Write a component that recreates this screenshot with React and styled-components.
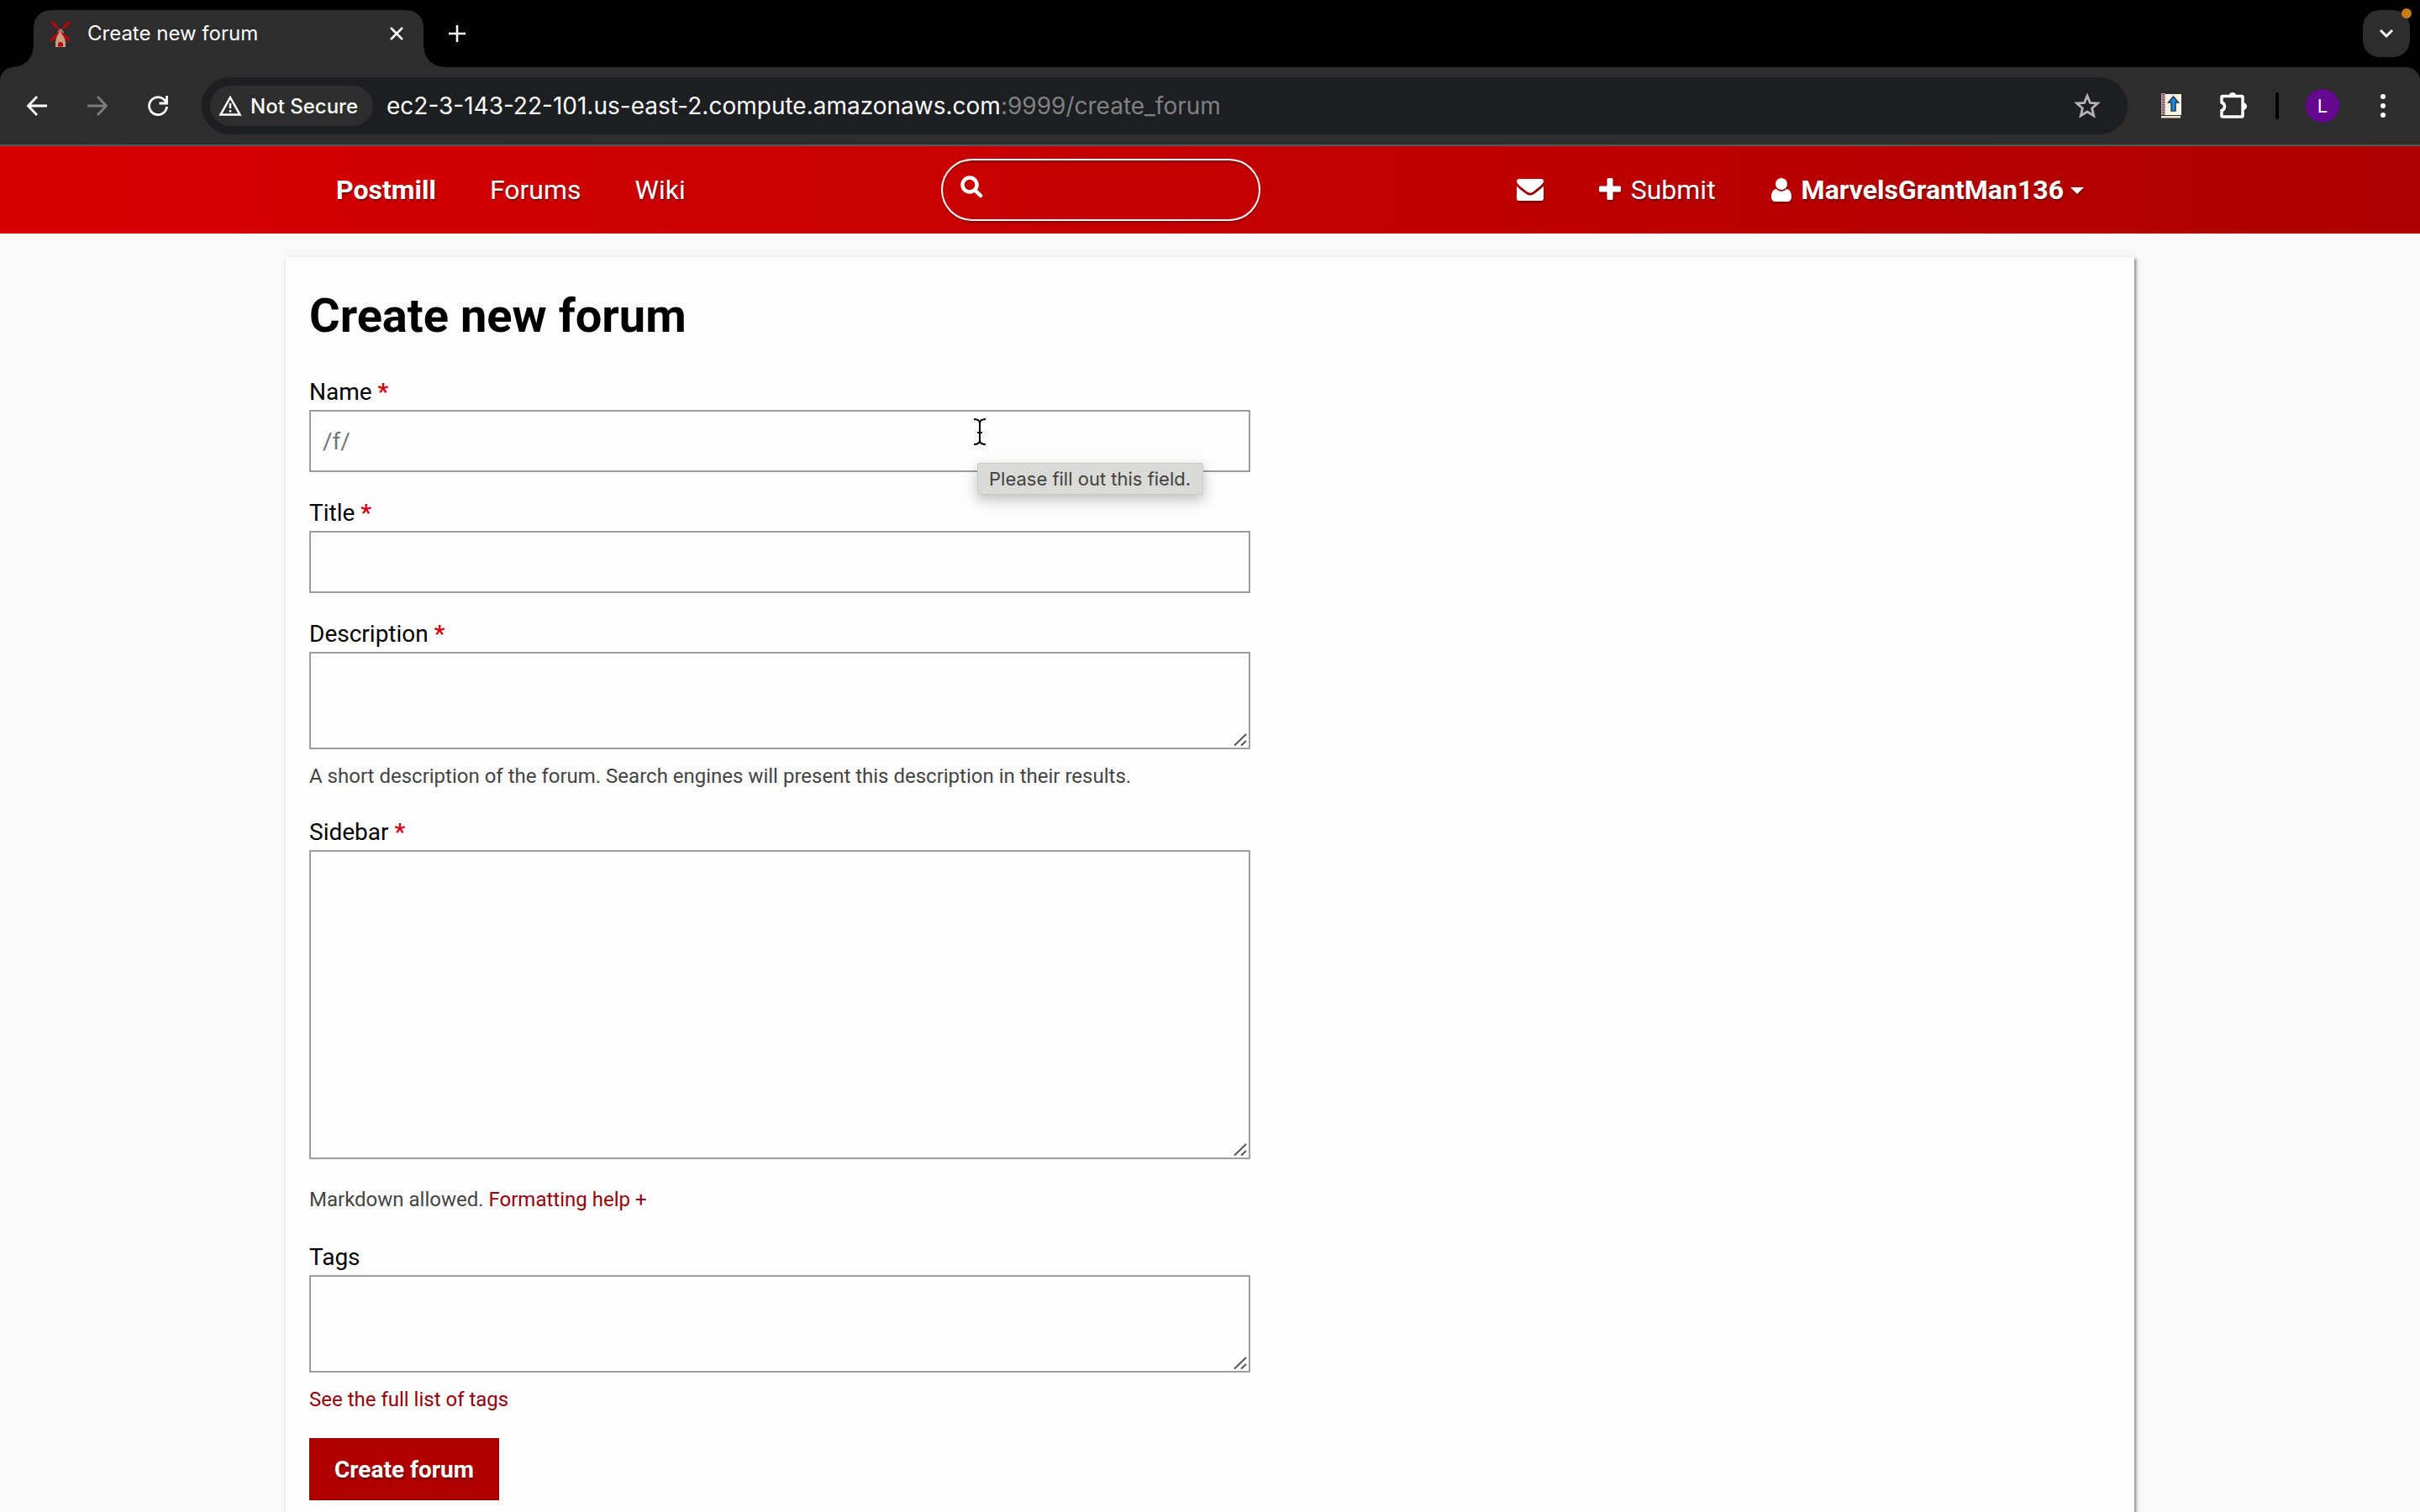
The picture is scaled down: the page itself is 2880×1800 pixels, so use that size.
import React from "react";
import styled, { createGlobalStyle, css } from "styled-components";

const GlobalStyle = createGlobalStyle`
  * { box-sizing: border-box; }
  body { margin: 0; background: #f9f9f9; }
  button, input, textarea { font: inherit; color: inherit; }
`;

const Window = styled.div`
  display: flex;
  flex-direction: column;
  height: 100vh;
  overflow: hidden;
  background: #000;
  font-family: Roboto, "Liberation Sans", sans-serif;
`;

/* Browser chrome */

const TabStrip = styled.div`
  flex: none;
  display: flex;
  align-items: center;
  height: 80px;
  padding: 12px 12px 0 40px;
  font-family: Inter, "Liberation Sans", sans-serif;
`;

const Tab = styled.div`
  position: relative;
  display: flex;
  align-items: center;
  align-self: stretch;
  gap: 18px;
  width: 464px;
  padding: 0 17px 12px 18px;
  border-radius: 20px 20px 0 0;
  background: #2d2d2d;
  color: #fff;
  font-size: 24px;
  line-height: 30px;

  &::before, &::after {
    content: "";
    position: absolute;
    bottom: 0;
    width: 24px;
    height: 24px;
  }
  &::before {
    right: 100%;
    background: radial-gradient(circle at 0 0, transparent 23px, #2d2d2d 24px);
  }
  &::after {
    left: 100%;
    background: radial-gradient(circle at 100% 0, transparent 23px, #2d2d2d 24px);
  }
`;

const TabTitle = styled.span`
  flex: 1;
  white-space: nowrap;
`;

const IconButton = styled.button`
  display: flex;
  align-items: center;
  justify-content: center;
  flex: none;
  width: ${(p) => p.$size || 48}px;
  height: ${(p) => p.$size || 48}px;
  padding: 0;
  border: 0;
  border-radius: 50%;
  background: none;
  color: ${(p) => p.$color || "#fff"};
`;

const NewTabButton = styled(IconButton)`
  margin: 0 auto 12px 16px;
`;

const TabSearch = styled(IconButton)`
  position: relative;
  margin-bottom: 12px;
  border-radius: 20px;
  background: #2d2d2d;

  &::after {
    content: "";
    position: absolute;
    top: -2px;
    right: -2px;
    width: 12px;
    height: 12px;
    border-radius: 50%;
    background: #c97a1c;
  }
`;

const Toolbar = styled.div`
  flex: none;
  display: flex;
  align-items: center;
  height: 94px;
  padding: 0 20px;
  border-bottom: 2px solid #565656;
  border-radius: 16px 16px 0 0;
  background: #2d2d2d;
  font-family: Inter, "Liberation Sans", sans-serif;
`;

const HistoryButtons = styled.div`
  display: flex;
  gap: 24px;
  margin-right: 28px;
`;

const AddressBar = styled.div`
  flex: 1;
  display: flex;
  align-items: center;
  height: 68px;
  padding: 0 24px 0 10px;
  border-radius: 34px;
  background: #1d1e21;
`;

const SecurityChip = styled.button`
  display: flex;
  align-items: center;
  gap: 10px;
  height: 48px;
  padding: 0 18px 0 10px;
  border: 0;
  border-radius: 24px;
  background: #2d2d2d;
  color: #fff;
  font-size: 24px;
  font-weight: 500;
  white-space: nowrap;
`;

const Address = styled.span`
  flex: 1;
  margin-left: 16px;
  color: #fff;
  font-size: 28px;
  line-height: 36px;
  white-space: nowrap;
`;

const AddressPath = styled.span`
  color: #808184;
`;

const ToolbarActions = styled.div`
  display: flex;
  align-items: center;
  gap: 26px;
  margin-left: 28px;
`;

const ToolbarDivider = styled.span`
  width: 4px;
  height: 32px;
  border-radius: 2px;
  background: #000;
`;

const Avatar = styled(IconButton)`
  margin: 0 2px 0 6px;
  background: #66078f;
  font-size: 22px;
`;

/* Site */

const Viewport = styled.div`
  flex: 1;
  min-height: 0;
  overflow: auto;
  scrollbar-width: none;
  background: #f9f9f9;
  color: #000;
`;

const SiteHeader = styled.header`
  background: linear-gradient(90deg, #d80003, #ae0000);
  color: #fff;
`;

const HeaderInner = styled.div`
  display: flex;
  align-items: center;
  justify-content: space-between;
  max-width: 2200px;
  height: 104px;
  margin: 0 auto;
  padding: 0 28px;
`;

const Nav = styled.nav`
  display: flex;
  align-items: center;
  gap: ${(p) => p.$gap || 0}px;
`;

const NavLink = styled.a`
  display: flex;
  align-items: center;
  gap: 12px;
  padding: 0 32px;
  color: #fff;
  font-size: 32px;
  line-height: 48px;
  font-weight: ${(p) => (p.$strong ? 700 : 400)};
  text-decoration: none;
  text-shadow: 1px 2px 2px rgba(0, 0, 0, 0.45);
  white-space: nowrap;

  svg { filter: drop-shadow(1px 2px 1px rgba(0, 0, 0, 0.35)); }
`;

const UserName = styled.span`
  display: flex;
  align-items: center;
  gap: 8px;
`;

const SearchBox = styled.label`
  display: flex;
  align-items: center;
  gap: 12px;
  width: 380px;
  height: 74px;
  padding: 0 20px;
  border: 2px solid #fff;
  border-radius: 37px;
  box-shadow: 0 2px 2px rgba(0, 0, 0, 0.3), inset 0 2px 2px rgba(0, 0, 0, 0.3);

  svg { margin-bottom: 8px; }
`;

const SearchInput = styled.input`
  flex: 1;
  min-width: 0;
  padding: 0;
  border: 0;
  outline: 0;
  background: none;
  font-size: 28px;
`;

const Card = styled.main`
  max-width: 2200px;
  margin: 28px auto 0;
  padding: 42px 28px 28px;
  background: #fdfdfd;
  box-shadow: 2px 2px 4px rgba(0, 0, 0, 0.5);
`;

const Heading = styled.h1`
  margin: 0 0 42px;
  font-size: 56px;
  line-height: 56px;
  font-weight: 700;
`;

const Form = styled.form`
  display: flex;
  flex-direction: column;
  align-items: flex-start;
  gap: 28px;
`;

const Field = styled.div`
  width: 100%;
  max-width: 1120px;
`;

const Label = styled.label`
  display: block;
  font-size: 28px;
  line-height: 42px;
`;

const Required = styled.span`
  color: #d3000d;
  font-weight: 700;
`;

const ControlWrap = styled.div`
  position: relative;
  display: flex;
`;

const control = css`
  display: block;
  width: 100%;
  margin: 0;
  padding: 14px;
  border: 2px solid #9e9e9e;
  border-radius: 0;
  outline: 0;
  background: #fdfdfd;
  font-size: 28px;
  line-height: 42px;
`;

const TextInput = styled.input`
  ${control}
  height: 74px;
  &::placeholder { color: #757575; opacity: 1; }
`;

const TextArea = styled.textarea`
  ${control}
  height: ${(p) => p.$height}px;
  resize: none;
`;

const Grip = styled.svg`
  position: absolute;
  right: 3px;
  bottom: 3px;
`;

const Pointer = styled.svg`
  position: absolute;
  top: 9px;
  left: 790px;
`;

const Tooltip = styled.div`
  position: absolute;
  top: 63px;
  left: 795px;
  z-index: 1;
  padding: 0 14px 0 13px;
  border: 1px solid #c9c9c7;
  border-radius: 2px;
  background: #dadad7;
  box-shadow: 0 6px 16px rgba(0, 0, 0, 0.25);
  color: #424240;
  font-family: Inter, "Liberation Sans", sans-serif;
  font-size: 22px;
  line-height: 36px;
  white-space: nowrap;
`;

const Help = styled.p`
  margin: ${(p) => (p.$roomy ? 28 : 14)}px 0 0;
  color: #444;
  font-size: 24px;
  line-height: ${(p) => (p.$roomy ? 40 : 36)}px;
`;

const TextLink = styled.a`
  color: #96000b;
  text-decoration: none;
`;

const SubmitButton = styled.button`
  height: 74px;
  padding: 0 29px;
  border: 1px solid #8f0000;
  background: #b00000;
  color: #fff;
  font-size: 28px;
  font-weight: 700;
  text-shadow: 1px 2px 2px rgba(0, 0, 0, 0.45);
`;

const Stroke = ({ size, width = 3, box = 24, children }) => (
  <svg width={size} height={size} viewBox={`0 0 ${box} ${box}`} fill="none" stroke="currentColor" strokeWidth={width} aria-hidden="true">
    {children}
  </svg>
);

const Windmill = () => (
  <svg width="28" height="32" viewBox="0 0 28 32" aria-hidden="true">
    <path d="M11 13l3-2 3 2 3 13v6H8v-6z" fill="#c9a083" />
    <path d="M1 0l6 3 7.500 10L6 8zM27 1l-6 2-7.500 10L22 8zM1 27l2-6 11-9-6 10zM26 27l-2-6-11-9 6 10z" fill="#b8060e" />
    <circle cx="14" cy="12.500" r="2.200" fill="#a8716a" />
    <path d="M11 31.500V29a3 3 0 0 1 6 0v2.500z" fill="#b8060e" />
  </svg>
);

const Notebook = () => (
  <svg width="26" height="32" viewBox="0 0 26 32" aria-hidden="true">
    <path d="M1 1h24v27H1z" fill="#26313a" />
    <path d="M1 28h23v2.500H1z" fill="#efe6d2" />
    <path d="M6 2h19v25H6z" fill="#fbf3e2" />
    <path d="M1 1h5v26H1z" fill="#c79aa8" />
    <path d="M3.500 2v25" stroke="#3b3a48" strokeWidth="2" strokeDasharray="1.500 1.500" />
    <path d="M15.500 5l6 7h-3.500v10h-5V12H9.500z" fill="#1e86dc" stroke="#1d3a55" strokeWidth="1.500" />
  </svg>
);

const ResizeGrip = () => (
  <Grip width="18" height="18" viewBox="0 0 18 18" stroke="#555" strokeWidth="2" aria-hidden="true">
    <path d="M2 16.500L16 3M10 16.500L16 11" />
  </Grip>
);

export default function App() {
  return (
    <Window>
      <GlobalStyle />
      <TabStrip>
        <Tab>
          <Windmill />
          <TabTitle>Create new forum</TabTitle>
          <IconButton $size={30} aria-label="Close tab">
            <Stroke size={18} width={2.5} box={18}><path d="M2 2l14 14M16 2L2 16" /></Stroke>
          </IconButton>
        </Tab>
        <NewTabButton aria-label="New tab">
          <Stroke size={22} width={2.5} box={22}><path d="M11 1v20M1 11h20" /></Stroke>
        </NewTabButton>
        <TabSearch $size={56} aria-label="Search tabs">
          <Stroke size={18} box={18}><path d="M2 5l7 7 7-7" /></Stroke>
        </TabSearch>
      </TabStrip>

      <Toolbar>
        <HistoryButtons>
          <IconButton aria-label="Back">
            <Stroke size={26} width={2.8} box={26}><path d="M25 13H3M13 2L2.500 13 13 24" /></Stroke>
          </IconButton>
          <IconButton aria-label="Forward" $color="#7c7c7c">
            <Stroke size={26} width={2.8} box={26}><path d="M1 13h22M13 2l10.500 11L13 24" /></Stroke>
          </IconButton>
          <IconButton aria-label="Reload">
            <Stroke size={26} width={2.8} box={26}>
              <path d="M23.500 14A10.500 10.500 0 1 1 20 5.300l3 3.200M23.500 1v9h-9" />
            </Stroke>
          </IconButton>
        </HistoryButtons>
        <AddressBar>
          <SecurityChip>
            <Stroke size={28} width={2.5} box={28}>
              <path d="M14 4L2.500 24.500h23zM14 11v6M14 19v2.500" />
            </Stroke>
            Not Secure
          </SecurityChip>
          <Address>
            ec2-3-143-22-101.us-east-2.compute.amazonaws.com<AddressPath>:9999/create_forum</AddressPath>
          </Address>
          <IconButton aria-label="Bookmark this tab" $color="#b3b3b5">
            <Stroke size={32} width={2.8} box={32}>
              <path d="M16 4l3.400 8.300 9 .7-6.800 5.900 2.100 8.800L16 23l-7.700 4.700 2.100-8.800L3.600 13l9-.7z" />
            </Stroke>
          </IconButton>
        </AddressBar>
        <ToolbarActions>
          <IconButton aria-label="Notebook extension"><Notebook /></IconButton>
          <IconButton aria-label="Extensions">
            <Stroke size={34} width={3.5} box={34}>
              <path d="M4 5.500h23a1 1 0 0 1 1 1V29a1 1 0 0 1-1 1H4a1 1 0 0 1-1-1v-6.500a5 5 0 0 0 0-9.500V6.500a1 1 0 0 1 1-1z" />
              <path d="M12 5a4 4 0 0 1 8 0zM28.500 13a4 4 0 0 1 0 9z" fill="currentColor" stroke="none" />
            </Stroke>
          </IconButton>
          <ToolbarDivider />
          <Avatar $size={40} aria-label="Profile">L</Avatar>
          <IconButton aria-label="Menu">
            <svg width="8" height="30" viewBox="0 0 8 30" fill="currentColor" aria-hidden="true">
              <circle cx="4" cy="4" r="3" /><circle cx="4" cy="15" r="3" /><circle cx="4" cy="26" r="3" />
            </svg>
          </IconButton>
        </ToolbarActions>
      </Toolbar>

      <Viewport>
        <SiteHeader>
          <HeaderInner>
            <Nav>
              <NavLink href="#" $strong>Postmill</NavLink>
              <NavLink href="#">Forums</NavLink>
              <NavLink href="#">Wiki</NavLink>
            </Nav>
            <SearchBox>
              <Stroke size={28} width={4.5} box={28}><circle cx="12" cy="12" r="8.500" /><path d="M18 18l7 7" strokeLinecap="round" /></Stroke>
              <SearchInput type="search" aria-label="Search" />
            </SearchBox>
            <Nav $gap={2}>
              <NavLink href="#" aria-label="Messages">
                <svg width="32" height="28" viewBox="0 0 32 28" fill="currentColor" aria-hidden="true">
                  <path d="M3 1h26a3 3 0 0 1 3 3c0 3-7 8-12 12-3 2.300-5 2.300-8 0C7 12 0 7 0 4a3 3 0 0 1 3-3z" />
                  <path d="M0 9.500c3 3.500 7 6 10.500 8.700 4 3.100 7 3.100 11 0C25 15.500 29 13 32 9.500V24a3 3 0 0 1-3 3H3a3 3 0 0 1-3-3z" />
                </svg>
              </NavLink>
              <NavLink href="#">
                <svg width="26" height="28" viewBox="0 0 26 28" fill="currentColor" aria-hidden="true">
                  <path d="M11 0h4a1.500 1.500 0 0 1 1.500 1.500v8h8A1.500 1.500 0 0 1 26 11v4a1.500 1.500 0 0 1-1.500 1.500h-8v8A1.500 1.500 0 0 1 15 26h-4a1.500 1.500 0 0 1-1.500-1.500v-8h-8A1.500 1.500 0 0 1 0 15v-4a1.500 1.500 0 0 1 1.500-1.500h8v-8A1.500 1.500 0 0 1 11 0z" />
                </svg>
                Submit
              </NavLink>
              <NavLink href="#" $strong>
                <svg width="24" height="28" viewBox="0 0 24 28" fill="currentColor" aria-hidden="true">
                  <circle cx="12" cy="7" r="7" />
                  <path d="M6 13c3.500 3.500 8.500 3.500 12 0 4 .5 6 4 6 9.500 0 3.500-2 5.500-5 5.500H5c-3 0-5-2-5-5.500C0 17 2 13.500 6 13z" />
                </svg>
                <UserName>
                  MarvelsGrantMan136
                  <svg width="16" height="10" viewBox="0 0 16 10" fill="currentColor" aria-hidden="true">
                    <path d="M0 2h16L8 10z" />
                  </svg>
                </UserName>
              </NavLink>
            </Nav>
          </HeaderInner>
        </SiteHeader>

        <Card>
          <Heading>Create new forum</Heading>
          <Form onSubmit={(e) => e.preventDefault()}>
            <Field>
              <Label htmlFor="name">Name <Required>*</Required></Label>
              <ControlWrap>
                <TextInput id="name" placeholder="/f/" />
                <Pointer width="16" height="34" viewBox="0 0 16 34" fill="none" stroke="#000" strokeWidth="2" aria-hidden="true">
                  <path d="M1 2c4 0 7 1.500 7 5v20c0 3.500-3 5-7 5M15 2c-4 0-7 1.500-7 5M8 27c0 3.500 3 5 7 5M5 18h6" />
                </Pointer>
                <Tooltip role="tooltip">Please fill out this field.</Tooltip>
              </ControlWrap>
            </Field>
            <Field>
              <Label htmlFor="title">Title <Required>*</Required></Label>
              <ControlWrap><TextInput id="title" /></ControlWrap>
            </Field>
            <Field>
              <Label htmlFor="description">Description <Required>*</Required></Label>
              <ControlWrap>
                <TextArea id="description" $height={116} />
                <ResizeGrip />
              </ControlWrap>
              <Help>A short description of the forum. Search engines will present this description in their results.</Help>
            </Field>
            <Field>
              <Label htmlFor="sidebar">Sidebar <Required>*</Required></Label>
              <ControlWrap>
                <TextArea id="sidebar" $height={368} />
                <ResizeGrip />
              </ControlWrap>
              <Help $roomy>Markdown allowed. <TextLink href="#">Formatting help +</TextLink></Help>
            </Field>
            <Field>
              <Label htmlFor="tags">Tags</Label>
              <ControlWrap>
                <TextArea id="tags" $height={116} />
                <ResizeGrip />
              </ControlWrap>
              <Help><TextLink href="#">See the full list of tags</TextLink></Help>
            </Field>
            <SubmitButton type="submit">Create forum</SubmitButton>
          </Form>
        </Card>
      </Viewport>
    </Window>
  );
}
